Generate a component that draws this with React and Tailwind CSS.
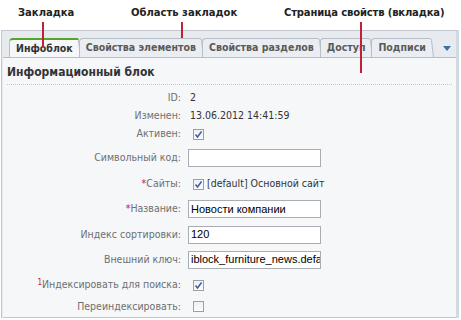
const tabs = [
  { name: "Инфоблок", active: true },
  { name: "Свойства элементов" },
  { name: "Свойства разделов" },
  { name: "Доступ" },
  { name: "Подписи" },
];

const Check = ({ checked }) => (
  <div className="w-[11px] h-[11px] border border-[#9aa0a8] bg-gradient-to-b from-[#eef0f3] to-[#fafbfc] flex items-center justify-center">
    {checked && (
      <svg width="9" height="9" viewBox="0 0 9 9">
        <path d="M1.5 4.5 L3.5 7 L7.5 1.5" fill="none" stroke="#3a5a9a" strokeWidth="1.4" />
      </svg>
    )}
  </div>
);

const Input = ({ value }) => (
  <div className="w-[133px] h-[18px] border border-[#a9adb3] bg-white px-[2px] flex items-center overflow-hidden whitespace-nowrap text-[11px] text-black font-['Liberation_Sans',Arial,sans-serif]">
    {value}
  </div>
);

const Row = ({ label, h, star, sup, children }) => (
  <div className={`flex items-center ${h}`}>
    <div className="w-[178px] text-right text-[10.5px] text-[#6f6f6f] whitespace-nowrap">
      {sup && <span className="text-[#c0203a] text-[8px] align-top">1</span>}
      {star && <span className="text-[#c0203a]">*</span>}
      {label}
    </div>
    <div className="ml-[7px] flex items-center">{children}</div>
  </div>
);

const Tab = ({ name, active }) => (
  <div className="flex items-end h-[19px] -mr-[2px]">
    <div
      className={`h-full flex items-center pl-[6px] pr-[2px] rounded-tl-[4px] border-l border-t ${
        active
          ? "bg-[#f5f7f9] border-l-[#b8bec6] border-t-2 border-t-[#55a52a] text-[#333]"
          : "bg-[#eaedf1] border-[#b8bec6] text-[#5a5a5a]"
      } text-[10.5px] font-bold whitespace-nowrap`}
    >
      {name}
    </div>
    <svg width="6" height="19" viewBox="0 0 6 19" className="block">
      <path d="M0 0 L2 0 Q3 0 3.5 2 L6 19 L0 19 Z" fill={active ? "#f5f7f9" : "#eaedf1"} />
      <path d="M0 0.5 L2 0.5 Q3 0.5 3.5 2.5 L5.5 19" fill="none" stroke="#b8bec6" strokeWidth="1" />
      {active && <path d="M0 1 L2 1 Q2.7 1 3 1.8" fill="none" stroke="#55a52a" strokeWidth="2" />}
    </svg>
  </div>
);

export default function App() {
  return (
    <div className="relative w-[461px] h-[320px] bg-white overflow-hidden font-['DejaVu_Sans_Condensed','DejaVu_Sans',Verdana,sans-serif]">
      {/* annotations */}
      <div className="h-[30px] relative text-[10px] font-bold text-[#222] font-['DejaVu_Sans',Verdana,sans-serif]">
        <span className="absolute left-[18px] top-[5px]">Закладка</span>
        <span className="absolute left-[131px] top-[5px]">Область закладок</span>
        <span className="absolute left-[284px] top-[5px] tracking-[-0.15px]">Страница свойств (вкладка)</span>
      </div>

      <div className="ml-[1px] mr-[2px] border-t border-l border-r-[3px] border-r-[#d3d9e2] border-t-[#c3c8cf] border-l-[#c3c8cf] bg-[#e7eaee] pl-[1px]">
        <div className="flex items-end h-[27px] pl-[6px] pr-[5px] border-b border-[#b8bec6]">
          {tabs.map((t) => (
            <Tab key={t.name} {...t} />
          ))}
          <div className="ml-auto mb-[6px]">
            <svg width="8" height="5" viewBox="0 0 8 5">
              <path d="M0 0 L8 0 L4 5 Z" fill="#3d6ea8" />
            </svg>
          </div>
        </div>

        <div className="bg-[#f5f7f9] h-[260px] border-b border-[#c3c8cf]">
          <div className="h-[27px] mx-[4px] pb-[3px] flex items-end border-b border-dotted border-[#c5c9cf] text-[12px] font-bold text-[#333]">
            Информационный блок
          </div>
          <div className="pt-[4px] text-[#333]">
            <Row label="ID:" h="h-[18px]">
              <span className="pl-[2px] text-[10.5px] text-[#333]">2</span>
            </Row>
            <Row label="Изменен:" h="h-[17px]">
              <span className="pl-[2px] text-[10.5px] text-[#333]">13.06.2012 14:41:59</span>
            </Row>
            <Row label="Активен:" h="h-[20px]">
              <div className="pl-[5px]"><Check checked /></div>
            </Row>
            <Row label="Символьный код:" h="h-[28px]">
              <Input value="" />
            </Row>
            <Row label="Сайты:" star h="h-[24px]">
              <div className="pl-[5px] flex items-center gap-[3px]">
                <Check checked />
                <span className="text-[10.5px] text-[#333]">[default] Основной сайт</span>
              </div>
            </Row>
            <Row label="Название:" star h="h-[26px]">
              <Input value="Новости компании" />
            </Row>
            <Row label="Индекс сортировки:" h="h-[25px]">
              <Input value="120" />
            </Row>
            <Row label="Внешний ключ:" h="h-[25px]">
              <Input value="iblock_furniture_news.defa" />
            </Row>
            <Row label="Индексировать для поиска:" sup h="h-[26px]">
              <div className="pl-[5px]"><Check checked /></div>
            </Row>
            <Row label="Переиндексировать:" h="h-[17px]">
              <div className="pl-[5px]"><Check /></div>
            </Row>
          </div>
        </div>
      </div>

      {/* red pointer lines */}
      <div className="absolute left-[42px] top-[22px] w-[2px] h-[25px] bg-[#c0203a]" />
      <div className="absolute left-[181px] top-[22px] w-[2px] h-[16px] bg-[#c0203a]" />
      <div className="absolute left-[360px] top-[22px] w-[2px] h-[51px] bg-[#c0203a]" />
    </div>
  );
}
